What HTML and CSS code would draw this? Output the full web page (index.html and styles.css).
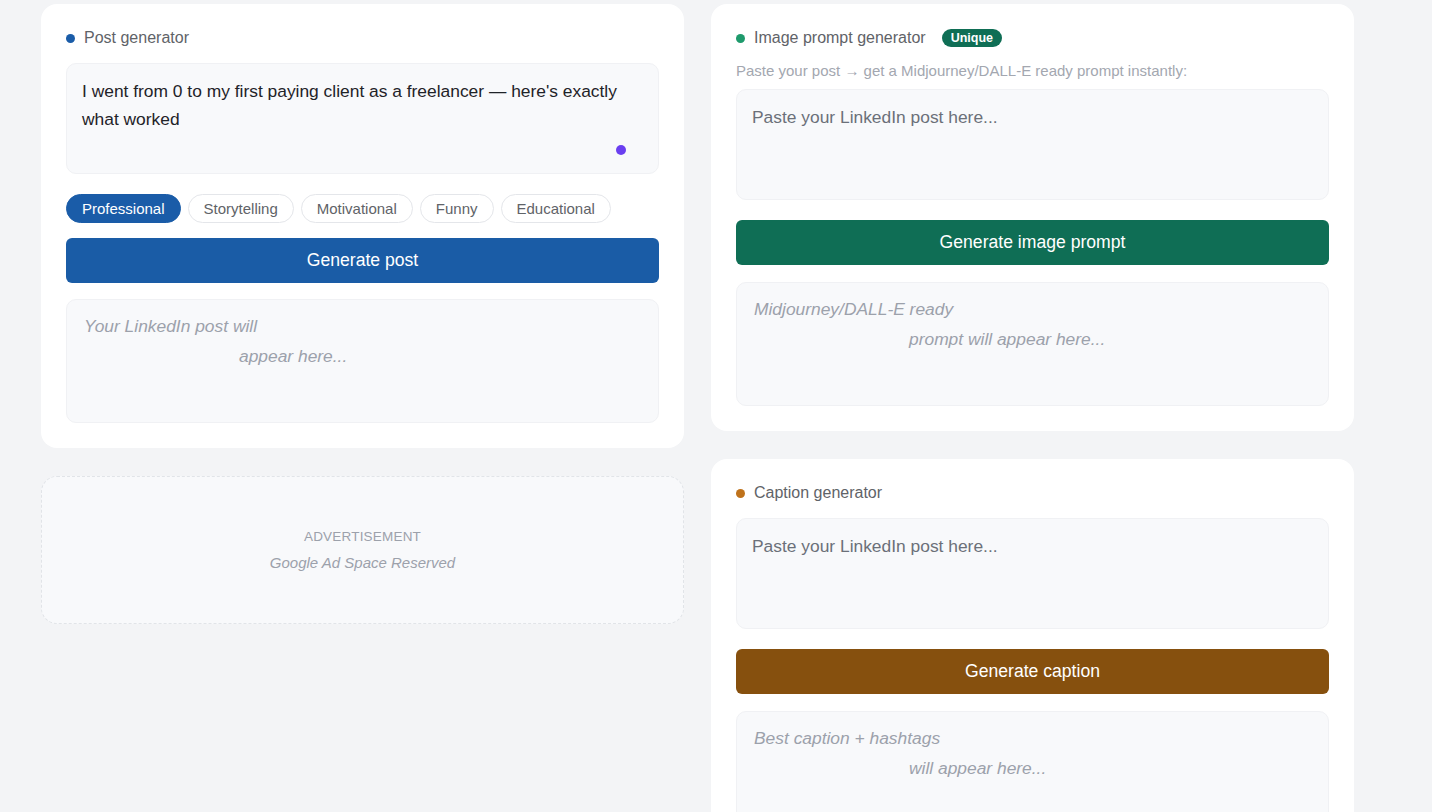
FILE: index.html
```html
<!DOCTYPE html>
<html lang="en">
<head>
    <meta charset="UTF-8">
    <meta name="viewport" content="width=device-width, initial-scale=1.0">
    <title>LinkedIn Content Tools</title>
    <link rel="stylesheet" href="styles.css">
</head>
<body>
    <div class="tools">
        <div class="column">
            <div class="card">
                <div class="card-title"><span class="dot dot-blue"></span>Post generator</div>
                <div class="input-wrap">
                    <textarea class="input" id="postTopic">I went from 0 to my first paying client as a freelancer — here's exactly what worked</textarea>
                    <span class="typing-dot"></span>
                </div>
                <div class="tones">
                    <button class="tone active">Professional</button>
                    <button class="tone">Storytelling</button>
                    <button class="tone">Motivational</button>
                    <button class="tone">Funny</button>
                    <button class="tone">Educational</button>
                </div>
                <button class="generate btn-blue">Generate post</button>
                <div class="output">
                    <div>Your LinkedIn post will</div>
                    <div class="output-indent">appear here...</div>
                </div>
            </div>

            <div class="ad-slot">
                <div class="ad-label">ADVERTISEMENT</div>
                <div class="ad-text">Google Ad Space Reserved</div>
            </div>
        </div>

        <div class="column">
            <div class="card">
                <div class="card-title"><span class="dot dot-green"></span>Image prompt generator <span class="badge">Unique</span></div>
                <p class="card-hint">Paste your post → get a Midjourney/DALL-E ready prompt instantly:</p>
                <textarea class="input" placeholder="Paste your LinkedIn post here..."></textarea>
                <button class="generate btn-green">Generate image prompt</button>
                <div class="output">
                    <div>Midjourney/DALL-E ready</div>
                    <div class="output-indent">prompt will appear here...</div>
                </div>
            </div>

            <div class="card">
                <div class="card-title"><span class="dot dot-orange"></span>Caption generator</div>
                <textarea class="input" placeholder="Paste your LinkedIn post here..."></textarea>
                <button class="generate btn-brown">Generate caption</button>
                <div class="output">
                    <div>Best caption + hashtags</div>
                    <div class="output-indent">will appear here...</div>
                </div>
            </div>
        </div>
    </div>

    <script>
        document.querySelectorAll('.tone').forEach(btn => {
            btn.addEventListener('click', () => {
                document.querySelectorAll('.tone').forEach(b => b.classList.remove('active'));
                btn.classList.add('active');
            });
        });
    </script>
</body>
</html>
```

FILE: styles.css
```css
body {
    margin: 0;
    background-color: #f3f4f6;
    font-family: "Liberation Sans", Arial, sans-serif;
    color: #1f2328;
}
.tools {
    display: grid;
    grid-template-columns: 643px 643px;
    gap: 27px;
    padding: 4px 0 40px 41px;
    align-items: start;
}
.column {
    display: flex;
    flex-direction: column;
    gap: 28px;
}
.card {
    background-color: #fff;
    border-radius: 16px;
    padding: 24px 25px 25px;
}
.card-title {
    display: flex;
    align-items: center;
    font-size: 16px;
    color: #5f6368;
    height: 20px;
    margin-bottom: 15px;
}
.dot {
    width: 9px;
    height: 9px;
    border-radius: 50%;
    margin-right: 9px;
}
.dot-blue { background-color: #1a5ca8; }
.dot-green { background-color: #1e9a6c; }
.dot-orange { background-color: #bf721b; }
.badge {
    background-color: #0f6e55;
    color: #fff;
    font-size: 12.5px;
    font-weight: bold;
    line-height: 14px;
    padding: 2px 9px;
    border-radius: 10px;
    margin-left: 16px;
}
.card-hint {
    margin: 1px 0 10px;
    font-size: 15px;
    line-height: 16px;
    color: #a3a7b0;
}
.input-wrap {
    position: relative;
}
.input {
    display: block;
    box-sizing: border-box;
    width: 100%;
    height: 111px;
    resize: none;
    background-color: #f8f9fb;
    border: 1px solid #f0f1f4;
    border-radius: 10px;
    padding: 13px 15px;
    font-family: inherit;
    font-size: 17.4px;
    line-height: 28px;
    color: #1f2328;
    outline: none;
}
.input::placeholder {
    color: #6b7079;
}
.typing-dot {
    position: absolute;
    right: 33px;
    bottom: 19px;
    width: 10px;
    height: 10px;
    border-radius: 50%;
    background-color: #6a3ff0;
}
.tones {
    display: flex;
    gap: 7px;
    margin: 20px 0 15px;
}
.tone {
    font-family: inherit;
    font-size: 15px;
    line-height: 17px;
    padding: 5px 15px;
    border: 1px solid #e4e6ea;
    border-radius: 16px;
    background-color: #fff;
    color: #5f6368;
    cursor: pointer;
}
.tone.active {
    background-color: #1a5ca8;
    border-color: #1a5ca8;
    color: #fff;
}
.generate {
    display: block;
    width: 100%;
    height: 45px;
    border: none;
    border-radius: 6px;
    color: #fff;
    font-family: inherit;
    font-size: 1.1rem;
    cursor: pointer;
}
.card > textarea + .generate {
    margin-top: 20px;
}
.btn-blue { background-color: #1a5ca6; }
.btn-green { background-color: #0f6e55; }
.btn-brown { background-color: #86500e; }
.output {
    box-sizing: border-box;
    height: 124px;
    margin-top: 16px;
    background-color: #f8f9fb;
    border: 1px solid #f0f1f4;
    border-radius: 10px;
    padding: 11px 17px;
    font-size: 17.4px;
    line-height: 30px;
    font-style: italic;
    color: #9ca1ab;
}
.card > textarea ~ .output {
    margin-top: 17px;
}
.output-indent {
    padding-left: 155px;
}
.ad-slot {
    height: 148px;
    box-sizing: border-box;
    border: 1px dashed #e1e4e8;
    border-radius: 16px;
    background-color: #f8f9fb;
    display: flex;
    flex-direction: column;
    align-items: center;
    justify-content: center;
    gap: 10px;
    color: #9ca1ab;
}
.ad-label {
    font-size: 13.5px;
    letter-spacing: 0.2px;
}
.ad-text {
    font-size: 15px;
    font-style: italic;
}
```
